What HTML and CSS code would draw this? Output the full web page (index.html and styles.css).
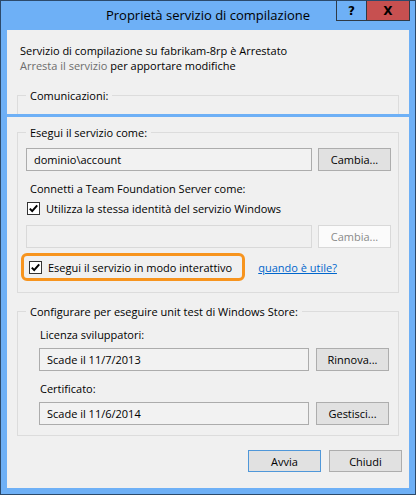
FILE: index.html
```html
<!DOCTYPE html>
<html lang="it">
<head>
<meta charset="utf-8">
<title>Proprietà servizio di compilazione</title>
<link rel="stylesheet" href="styles.css">
</head>
<body>
<div class="window">
  <div class="titlebar">
    <div class="title">Proprietà servizio di compilazione</div>
    <div class="caption">
      <span class="cap-btn help">?</span>
      <span class="cap-btn close">X</span>
    </div>
  </div>
  <div class="client">
    <div class="pane top-pane">
      <p class="status">Servizio di compilazione su fabrikam-8rp è Arrestato<br><span class="muted">Arresta il servizio</span> per apportare modifiche</p>
      <fieldset class="group comm"><legend>Comunicazioni:</legend></fieldset>
    </div>
    <div class="pane bottom-pane">
      <fieldset class="group runas">
        <legend>Esegui il servizio come:</legend>
        <div class="field-row">
          <div class="textbox">dominio\account</div>
          <span class="btn">Cambia...</span>
        </div>
        <div class="line connect">Connetti a Team Foundation Server come:</div>
        <label class="check-row same-id">
          <svg class="check" width="13" height="13" viewBox="0 0 13 13"><rect x="0.5" y="0.5" width="12" height="12" fill="#fff" stroke="#333"/><path d="M2.8 6.6l2.4 2.5L10.2 3.3" fill="none" stroke="#000" stroke-width="2"/></svg>
          <span>Utilizza la stessa identità del servizio Windows</span>
        </label>
        <div class="field-row disabled-row">
          <div class="textbox disabled"></div>
          <span class="btn disabled">Cambia...</span>
        </div>
        <div class="interactive-row">
          <label class="highlight">
            <svg class="check" width="13" height="13" viewBox="0 0 13 13"><rect x="0.5" y="0.5" width="12" height="12" fill="#fff" stroke="#333"/><path d="M2.8 6.6l2.4 2.5L10.2 3.3" fill="none" stroke="#000" stroke-width="2"/></svg>
            <span>Esegui il servizio in modo interattivo</span>
          </label>
          <a class="link" href="#">quando è utile?</a>
        </div>
      </fieldset>
      <fieldset class="group store">
        <legend>Configurare per eseguire unit test di Windows Store:</legend>
        <div class="store-inner">
          <div class="line">Licenza sviluppatori:</div>
          <div class="field-row sub">
            <div class="textbox">Scade il 11/7/2013</div>
            <span class="btn">Rinnova...</span>
          </div>
          <div class="line cert">Certificato:</div>
          <div class="field-row sub">
            <div class="textbox">Scade il 11/6/2014</div>
            <span class="btn">Gestisci...</span>
          </div>
        </div>
      </fieldset>
      <div class="actions">
        <span class="btn default">Avvia</span>
        <span class="btn">Chiudi</span>
      </div>
    </div>
  </div>
</div>
</body>
</html>
```
FILE: styles.css
```css
* { box-sizing: border-box; }
html, body { margin: 0; padding: 0; }
body {
  width: 416px;
  height: 495px;
  background: #fff;
  font-family: "Open Sans", "Noto Sans", sans-serif;
  font-size: 11px;
  color: #000;
  overflow: hidden;
}
.window {
  width: 416px;
  height: 495px;
  border: 1px solid #2c4a6b;
  background: #6eb0f6;
  display: flex;
  flex-direction: column;
}
.titlebar {
  height: 29px;
  display: grid;
  grid-template-areas: "a";
  flex: none;
}
.title {
  grid-area: a;
  text-align: center;
  font-size: 13px;
  line-height: 29px;
}
.caption {
  grid-area: a;
  justify-self: end;
  align-self: start;
  display: flex;
  margin-top: -1px;
  margin-right: 5px;
}
.cap-btn {
  height: 21px;
  display: flex;
  align-items: center;
  justify-content: center;
  font-family: "DejaVu Sans", sans-serif;
  font-weight: bold;
  font-size: 12px;
  border: 1px solid #2f3a46;
  border-top-color: #2c4a6b;
}
.help {
  width: 30px;
  background: #6eb0f6;
  border-right: none;
}
.close {
  width: 44px;
  background: #c75050;
  color: #000;
}
.client {
  flex: 1;
  margin: 0 6px 6px 6px;
  display: flex;
  flex-direction: column;
  gap: 3px;
}
.pane { background: #f0f0f0; }
.top-pane {
  height: 84px;
  flex: none;
  padding: 13px 10px 0 10px;
  overflow: hidden;
}
.status {
  margin: 0;
  padding-left: 3px;
  line-height: 15px;
}
.muted { color: #6d6d6d; }
.group {
  margin: 0;
  border: 1px solid #dcdcdc;
  min-width: 0;
}
.group legend {
  padding: 0 4px;
  line-height: 15px;
}
.comm {
  margin-top: 15px;
  height: 40px;
  padding: 0 8px;
}
.bottom-pane {
  flex: 1;
  padding: 8px 10px 0 10px;
  display: flex;
  flex-direction: column;
}
.runas {
  padding: 8px 7px 11px 8px;
}
.field-row {
  display: flex;
  gap: 6px;
  height: 23px;
}
.textbox {
  flex: 1;
  border: 1px solid #acacac;
  background: #f2f2f2;
  padding-left: 7px;
  line-height: 21px;
}
.textbox.disabled {
  border-color: #d9d9d9;
  background: #f0f0f0;
}
.btn {
  width: 73px;
  flex: none;
  display: flex;
  align-items: center;
  justify-content: center;
  background: #e1e1e1;
  border: 1px solid #adadad;
}
.btn.disabled {
  background: #fbfbfb;
  border-color: #d9d9d9;
  color: #8a8a8a;
}
.line { line-height: 15px; }
.connect {
  margin-top: 10px;
  padding-left: 4px;
}
.check-row {
  display: flex;
  align-items: center;
  gap: 6px;
  line-height: 15px;
  margin-top: 5px;
  padding-left: 1px;
}
.check { flex: none; display: block; }
.disabled-row {
  margin-top: 9px;
}
.interactive-row {
  margin-top: 5px;
  display: flex;
  align-items: center;
  gap: 13px;
}
.highlight {
  margin-left: -5px;
  height: 28px;
  display: flex;
  align-items: center;
  gap: 6px;
  padding: 0 10px 0 5px;
  border: 3px solid #f7941e;
  border-radius: 6px;
}
.link {
  color: #0066cc;
  text-decoration: underline;
}
.store {
  margin-top: 11px;
  padding: 8px 9px 10px 8px;
}
.store-inner {
  padding-left: 13px;
}
.store .line { padding-left: 1px; }
.field-row.sub {
  gap: 7px;
  margin-top: 6px;
}
.cert { margin-top: 10px; }
.actions {
  margin-top: 14px;
  margin-right: -3px;
  display: flex;
  justify-content: flex-end;
  gap: 8px;
}
.actions .btn { height: 22px; }
.btn.default { border-color: #4f97d9; }
```
